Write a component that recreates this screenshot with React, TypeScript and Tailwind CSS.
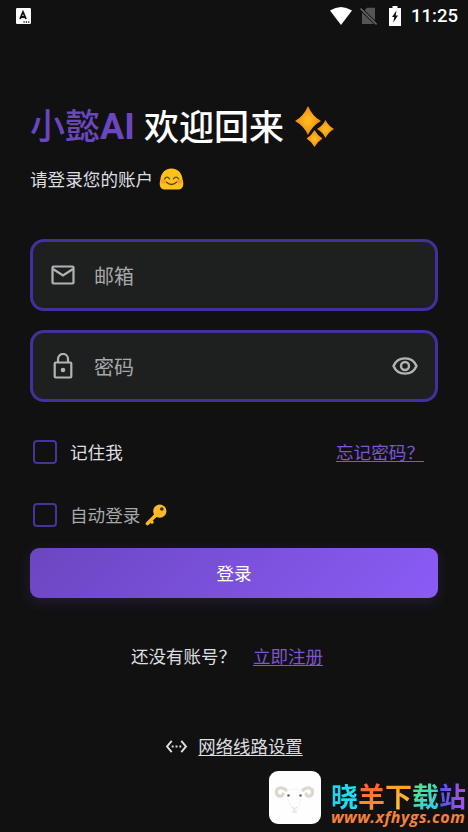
import React from "react";
import { MdSettingsEthernet } from "react-icons/md";

interface FieldProps {
  label: string;
  icon: React.ReactNode;
  trailing?: React.ReactNode;
}

interface CheckRowProps {
  label: string;
  textClass: string;
  children?: React.ReactNode;
}

function StatusBar() {
  return (
    <header className="flex h-8 shrink-0 items-center justify-between pl-4 pr-[10px]">
      <svg width="15" height="16" viewBox="0 0 15 16">
        <rect width="15" height="16" rx="1.2" fill="#fff" />
        <path d="M4 11 7 4l3 7M5.2 9h3.6" fill="none" stroke="#111" strokeWidth="1.8" />
        <path d="M7.5 14h1.2M9.8 14H11M12.1 14h1.2" stroke="#111" strokeWidth="1.4" />
      </svg>

      <div className="flex items-center">
        <svg className="mr-2" width="22" height="18" viewBox="0 0 22 18">
          <path d="M0 3.6Q11-3.6 22 3.6L11 18Z" fill="#fff" />
        </svg>
        <svg className="mr-[11px]" width="18" height="18" viewBox="0 0 18 18">
          <path d="M2 6 7 .7h8V17H2Z" fill="#555" />
          <path d="M.6 1.6 17 17.6" stroke="#111" strokeWidth="3.4" />
          <path d="M.6 1.6 16.6 17.4" stroke="#666" strokeWidth="1.5" />
        </svg>
        <svg className="mr-[10px]" width="12" height="20" viewBox="0 0 12 20">
          <path d="M3.5 0h5v2H12v18H0V2h3.5Z" fill="#fff" />
          <path d="M7.5 4.5 3 11h2.300l-1 5.500L9 9.500H6.700Z" fill="#111" />
        </svg>
        <span className="font-[Roboto] text-[18.5px] font-medium leading-5 text-white">11:25</span>
      </div>
    </header>
  );
}

function Sparkles() {
  return (
    <svg width="40" height="42" viewBox="0 0 40 42">
      <defs>
        <radialGradient id="spark">
          <stop offset="0.2" stopColor="#fdb71f" />
          <stop offset="1" stopColor="#f0860f" />
        </radialGradient>
      </defs>
      <g fill="url(#spark)">
        <path d="M13 0Q17.500 10.500 26 15 17.500 19.500 13 29 8.500 19.500 0 15 8.500 10.500 13 0Z" />
        <path d="M30.500 14Q33.500 20 39 23 33.500 26 30.500 32 27.500 26 22 23 27.500 20 30.500 14Z" />
        <path d="M19.500 24Q22.500 29.500 27.500 32.500 22.500 35.500 19.500 41 16.500 35.500 11.500 32.500 16.500 29.500 19.500 24Z" />
      </g>
    </svg>
  );
}

function SmileEmoji() {
  return (
    <svg width="25" height="22" viewBox="0 0 25 22">
      <path
        d="M12.500 .5C19.500 .5 23 5.500 23.600 11.500 25 16 24.500 21.500 19.500 21.500h-14C.5 21.500 0 16 1.400 11.500 2 5.500 5.500 .5 12.500 .5Z"
        fill="#fcc21b"
      />
      <ellipse cx="4.500" cy="13.500" rx="3" ry="2" fill="#f79329" opacity=".7" />
      <ellipse cx="20.500" cy="13.500" rx="3" ry="2" fill="#f79329" opacity=".7" />
      <path
        d="M5.500 10.800Q8 7.500 10.500 10.800M14.500 10.800Q17 7.500 19.500 10.800M7.500 14.300Q12.500 18.500 17.500 14.300"
        fill="none"
        stroke="#5d4515"
        strokeWidth="1.400"
        strokeLinecap="round"
      />
    </svg>
  );
}

function KeyEmoji() {
  return (
    <svg width="22" height="22" viewBox="0 0 22 22">
      <path d="M12 10 2.500 19.500" stroke="#fcb827" strokeWidth="3.600" strokeLinecap="round" />
      <path d="M5.500 16.500 8 19.200" stroke="#fcb827" strokeWidth="3" />
      <circle cx="14.800" cy="7.200" r="6.600" fill="#fcb827" />
      <circle cx="16.800" cy="5" r="1.800" fill="#3d2c10" />
    </svg>
  );
}

function MailIcon() {
  return (
    <svg width="24" height="20" viewBox="0 0 24 20" fill="none" stroke="#b1b4b7" strokeWidth="2.200">
      <rect x="1.500" y="1.500" width="21" height="17" rx="1" />
      <path d="m2 4 10 6.500L22 4" />
    </svg>
  );
}

function LockIcon() {
  return (
    <svg width="20" height="26" viewBox="0 0 20 26" fill="none" stroke="#b1b4b7" strokeWidth="2.200">
      <rect x="1.700" y="9.500" width="16.600" height="15" rx="1" />
      <path d="M5 9.500V6a5 5 0 0 1 10 0v3.500" />
      <circle cx="10" cy="17" r="2.300" fill="#b1b4b7" stroke="none" />
    </svg>
  );
}

function EyeIcon() {
  return (
    <svg width="26" height="18" viewBox="0 0 26 18" fill="none" stroke="#b1b4b7" strokeWidth="2.400">
      <path d="M1.500 9C3.500 4.200 8 1.400 13 1.400S22.500 4.200 24.500 9C22.500 13.800 18 16.600 13 16.600S3.500 13.800 1.500 9Z" />
      <circle cx="13" cy="9" r="4" />
    </svg>
  );
}

function Field({ label, icon, trailing }: FieldProps) {
  return (
    <div className="flex h-[72px] items-center rounded-[14px] border-[3px] border-[#43309f] bg-[#1e1f1f] pl-[17px] pr-[17px]">
      <div className="flex w-[25px] justify-center">{icon}</div>
      <span className="ml-[19px] flex-1 pt-[2px] text-[20px] leading-6 text-[#a6a8aa]">{label}</span>
      {trailing}
    </div>
  );
}

function CheckRow({ label, textClass, children }: CheckRowProps) {
  return (
    <div className="flex h-6 items-center pl-[3px]">
      <span className="h-6 w-6 rounded-[4px] border-2 border-[#45349c]" />
      <span className={`ml-[13px] text-[17.6px] leading-6 ${textClass}`}>{label}</span>
      {children}
    </div>
  );
}

function SheepLogo() {
  return (
    <svg width="52" height="53" viewBox="0 0 52 53">
      <rect width="52" height="53" rx="9" fill="#fefefe" />
      <g fill="none" stroke="#dcd8cf" strokeWidth="3.200" strokeLinecap="round">
        <path d="M17 19C13 15 7 17 7.500 21.500 8 26 13 26 14 23" />
        <path d="M34 19C38 15 44 17 43.500 21.500 43 26 38 26 37 23" />
      </g>
      <path d="M18 20q8-4 15 0M19 28l4 10q3 3 6 0l3-10" fill="none" stroke="#f5f4f2" />
      <circle cx="19.500" cy="24.500" r="1.300" fill="#666" />
      <circle cx="31.500" cy="24.500" r="1.300" fill="#666" />
      <path d="m23 36 2.500 2 2.500-2M25.500 38v2.500M23 41h5" fill="none" stroke="#ddd8d2" />
    </svg>
  );
}

export default function App() {
  return (
    <div className="flex h-screen w-full flex-col overflow-hidden bg-[#111111] font-['Noto_Sans_CJK_SC',sans-serif]">
      <StatusBar />

      <main className="flex flex-col px-[30px] pt-[72px]">
        <h1 className="flex h-[42px] items-center whitespace-nowrap text-[35px] font-medium leading-[42px] text-white">
          <span className="flex w-[104px] shrink-0 items-baseline text-[#6b46c1]">
            <span className="shrink-0">小懿</span>
            <span className="font-[Roboto] text-[36px] font-bold">AI</span>
          </span>
          <span className="ml-[10px] mr-[11px]">欢迎回来</span>
          <span className="pt-[3px]">
            <Sparkles />
          </span>
        </h1>

        <p className="mt-[21px] flex h-6 items-center text-[17.6px] leading-6 text-[#dedfe0]">
          请登录您的账户
          <span className="ml-[6px]">
            <SmileEmoji />
          </span>
        </p>

        <div className="mt-[48px] flex flex-col gap-[19px]">
          <Field label="邮箱" icon={<MailIcon />} />
          <Field label="密码" icon={<LockIcon />} trailing={<EyeIcon />} />
        </div>

        <div className="mt-[38px] flex items-center justify-between pr-[14px]">
          <CheckRow label="记住我" textClass="text-[#dedfe0]" />
          <a className="text-[17.6px] leading-6 text-[#7d55d6] underline underline-offset-2">忘记密码？</a>
        </div>

        <div className="mt-[39px]">
          <CheckRow label="自动登录" textClass="text-[#a6a8aa]">
            <span className="ml-[5px]">
              <KeyEmoji />
            </span>
          </CheckRow>
        </div>

        <button className="mt-[21px] h-[50px] rounded-[9px] bg-linear-135 from-[#6b46c1] to-[#8b5cf6] pt-px text-[17.5px] text-white shadow-[0_4px_14px_rgba(107,70,193,0.22)]">
          登录
        </button>

        <div className="mt-[46px] flex justify-center gap-[17px] pr-[14px] text-[17.5px] leading-6">
          <span className="text-[#dedfe0]">还没有账号？</span>
          <a className="text-[#7d55d6] underline underline-offset-2">立即注册</a>
        </div>

        <div className="mt-[66px] flex items-center justify-center gap-[10px] text-[17.4px] leading-6 text-[#dedfe0]">
          <MdSettingsEthernet size={23} />
          <a className="underline underline-offset-2">网络线路设置</a>
        </div>
      </main>

      <footer className="mt-[13px] flex gap-[10px] pl-[269px]">
        <SheepLogo />
        <div className="flex flex-col pt-[11px]">
          <div className="flex text-[27px] font-bold leading-[28px]">
            <span className="bg-linear-to-r from-[#18d3f5] to-[#24e2ef] bg-clip-text text-transparent">晓</span>
            <span className="bg-linear-to-b from-[#ff5a36] to-[#ff9630] bg-clip-text text-transparent">羊</span>
            <span className="bg-linear-to-b from-[#ff9c25] to-[#ffc63c] bg-clip-text text-transparent">下</span>
            <span className="bg-linear-to-br from-[#62e66b] to-[#28c9f0] bg-clip-text text-transparent">载</span>
            <span className="bg-linear-to-r from-[#4d54e8] to-[#ab4cf0] bg-clip-text text-transparent">站</span>
          </div>
          <span className="font-['Open_Sans',sans-serif] text-[16px] font-bold italic leading-[14px] tracking-[0.5px] text-[#f5823b]">
            www.xfhygs.com
          </span>
        </div>
      </footer>
    </div>
  );
}
